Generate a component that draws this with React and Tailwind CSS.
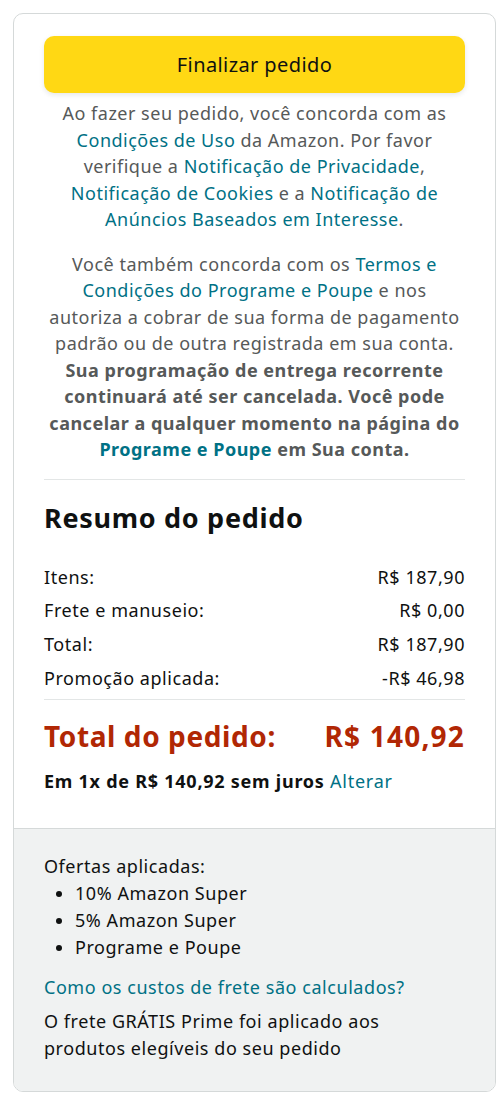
import React from "react";

const L = ({ children, bold }) => (
  <span className={`text-[#007185] ${bold ? "font-bold" : ""}`}>{children}</span>
);

function Row({ label, value }) {
  return (
    <div className="flex justify-between items-center h-[33.6px] text-[18px] tracking-[0.55px] text-[#0F1111]">
      <span>{label}</span>
      <span>{value}</span>
    </div>
  );
}

export default function App() {
  return (
    <div
      className="bg-white w-[500px] min-h-[1108px] pt-[13px] pl-[13px] pr-[4px]"
      style={{ fontFamily: '"Noto Sans", "Open Sans", sans-serif' }}
    >
      <div className="w-[483px] border border-[#d5d9d9] rounded-[10px] overflow-hidden">
        <div className="px-[30px] pt-[22px] pb-[35px]">
          <button className="w-full h-[57px] rounded-[10px] bg-[#FFD814] text-[#0F1111] text-[20px] tracking-[0.4px] shadow-[0_2px_5px_rgba(213,217,217,0.6)]">
            Finalizar pedido
          </button>
          <p className="-mx-[6px] mt-[7px] text-center whitespace-nowrap text-[18px] tracking-[0.5px] leading-[26.5px] text-[#565959]">
            Ao fazer seu pedido, você concorda com as
            <br />
            <L>Condições de Uso</L> da Amazon. Por favor
            <br />
            verifique a <L>Notificação de Privacidade</L>,
            <br />
            <L>Notificação de Cookies</L> e a <L>Notificação de</L>
            <br />
            <L>Anúncios Baseados em Interesse</L>.
          </p>
          <p className="-mx-[6px] mt-[18px] text-center whitespace-nowrap text-[18px] tracking-[0.5px] leading-[26.5px] text-[#565959]">
            Você também concorda com os <L>Termos e</L>
            <br />
            <L>Condições do Programe e Poupe</L> e nos
            <br />
            autoriza a cobrar de sua forma de pagamento
            <br />
            padrão ou de outra registrada em sua conta.
            <br />
            <span className="font-bold">
              Sua programação de entrega recorrente
              <br />
              continuará até ser cancelada. Você pode
              <br />
              cancelar a qualquer momento na página do
              <br />
              <L bold>Programe e Poupe</L> em Sua conta.
            </span>
          </p>
          <div className="mt-[16px] border-t border-[#e3e6e6]" />
          <h2 className="mt-[22px] text-[27px] tracking-[0.7px] leading-[32px] font-bold text-[#0F1111]">
            Resumo do pedido
          </h2>
          <div className="mt-[27px]">
            <Row label="Itens:" value="R$ 187,90" />
            <Row label="Frete e manuseio:" value="R$ 0,00" />
            <Row label="Total:" value="R$ 187,90" />
            <Row label="Promoção aplicada:" value="-R$ 46,98" />
          </div>
          <div className="mt-[4px] border-t border-[#e3e6e6]" />
          <div className="mt-[18px] flex justify-between items-center text-[28px] leading-[36px] font-bold text-[#B12704]">
            <span className="tracking-[0.6px]">Total do pedido:</span>
            <span className="tracking-[1.2px]">R$ 140,92</span>
          </div>
          <div className="mt-[15px] whitespace-nowrap text-[18px] tracking-[0.75px] leading-[24px] text-[#0F1111]">
            <span className="font-bold">Em 1x de R$ 140,92 sem juros</span>{" "}
            <L>Alterar</L>
          </div>
        </div>
        <div className="bg-[#f0f2f2] border-t border-[#d5d9d9] px-[30px] pt-[24px] pb-[29px] text-[18px] tracking-[0.55px] leading-[27px] text-[#0F1111]">
          <div>Ofertas aplicadas:</div>
          <ul className="list-disc pl-[31px]">
            <li>10% Amazon Super</li>
            <li>5% Amazon Super</li>
            <li>Programe e Poupe</li>
          </ul>
          <div className="mt-[13px] text-[#007185] whitespace-nowrap">
            Como os custos de frete são calculados?
          </div>
          <div className="mt-[7px] whitespace-nowrap">
            O frete GRÁTIS Prime foi aplicado aos
            <br />
            produtos elegíveis do seu pedido
          </div>
        </div>
      </div>
    </div>
  );
}
